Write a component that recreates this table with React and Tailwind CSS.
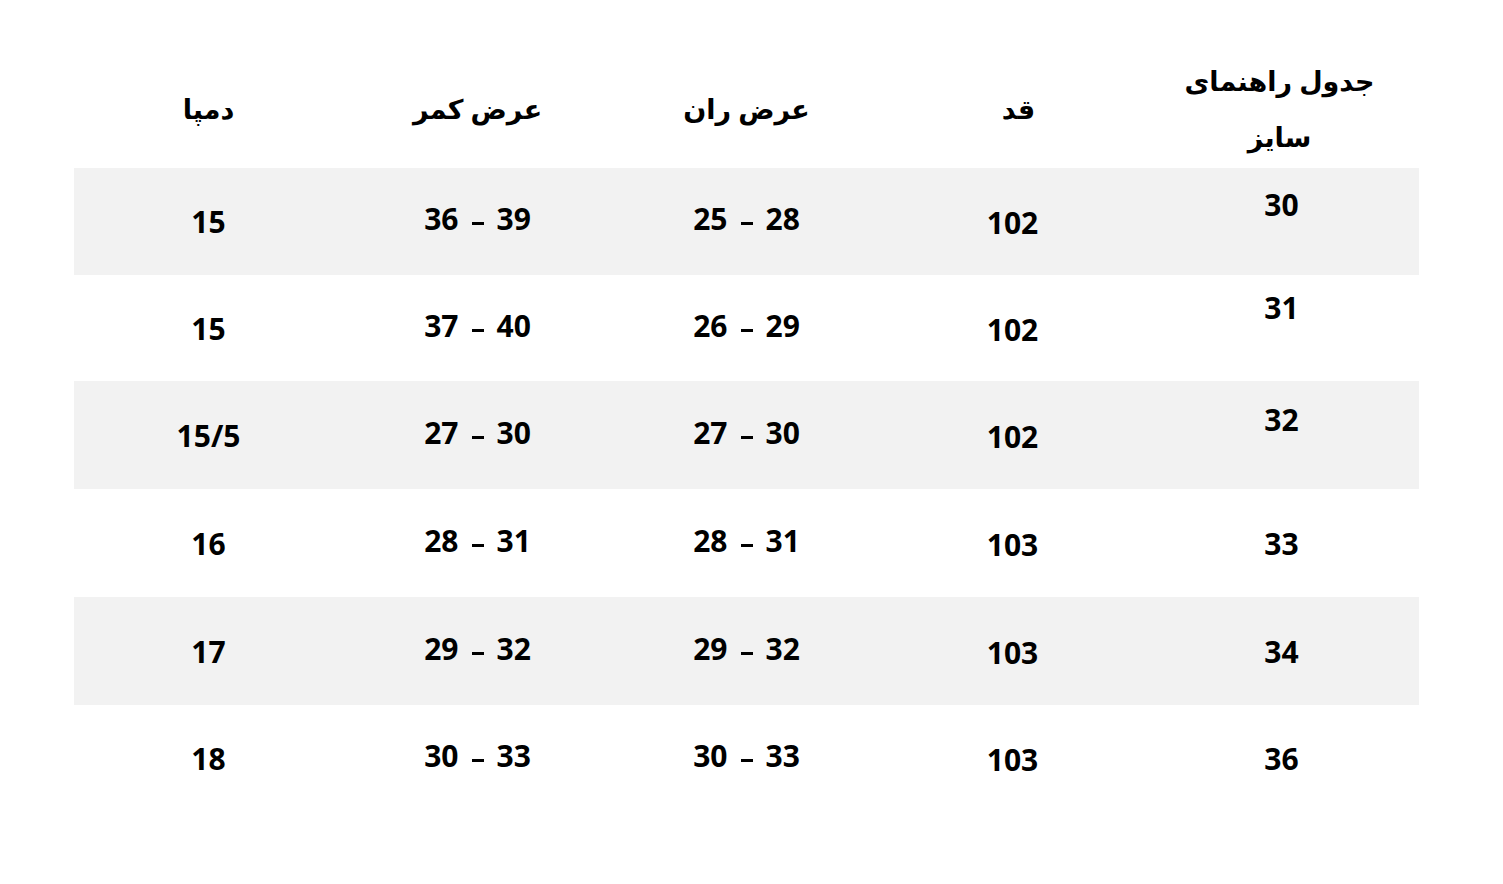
const rows = [
  { size: "30", height: "102", thigh: ["25", "28"], waist: ["36", "39"], hem: "15", h: "h-[107px]", bg: "bg-[#f2f2f2]", sizeShift: "-translate-y-[17px]" },
  { size: "31", height: "102", thigh: ["26", "29"], waist: ["37", "40"], hem: "15", h: "h-[106px]", bg: "bg-white", sizeShift: "-translate-y-[21px]" },
  { size: "32", height: "102", thigh: ["27", "30"], waist: ["27", "30"], hem: "15/5", h: "h-[108px]", bg: "bg-[#f2f2f2]", sizeShift: "-translate-y-[16px]" },
  { size: "33", height: "103", thigh: ["28", "31"], waist: ["28", "31"], hem: "16", h: "h-[108px]", bg: "bg-white", sizeShift: "" },
  { size: "34", height: "103", thigh: ["29", "32"], waist: ["29", "32"], hem: "17", h: "h-[108px]", bg: "bg-[#f2f2f2]", sizeShift: "" },
  { size: "36", height: "103", thigh: ["30", "33"], waist: ["30", "33"], hem: "18", h: "h-[107px]", bg: "bg-white", sizeShift: "" },
];

function Range({ value }) {
  // visual order as in the chart: low – high
  return (
    <div dir="ltr" className="flex items-center -translate-y-[3px]">
      <span>{value[0]}</span>
      <span className="inline-block w-[12px] h-[3px] bg-black mx-[13px] translate-y-[5px]" />
      <span>{value[1]}</span>
    </div>
  );
}

export default function App() {
  return (
    <div className="w-[1503px] h-[884px] bg-white text-black font-['Open_Sans','DejaVu_Sans',sans-serif]">
      <div dir="rtl" className="ml-[74px] w-[1345px]">
        {/* header */}
        <div className="grid grid-cols-5 h-[168px] pt-[50px] text-[27px] font-bold leading-[56px]">
          <div className="flex items-center justify-center text-center pr-[10px]">
            <span>
              جدول راهنمای
              <br />
              سایز
            </span>
          </div>
          <div className="flex items-center justify-center pl-[6px]">قد</div>
          <div className="flex items-center justify-center">عرض ران</div>
          <div className="flex items-center justify-center">عرض کمر</div>
          <div className="flex items-center justify-center">دمپا</div>
        </div>

        {rows.map((r) => (
          <div
            key={r.size}
            className={`grid grid-cols-5 ${r.h} ${r.bg} text-[30px] font-bold`}
          >
            <div className="flex items-center justify-center">
              <span className={`-translate-x-[3px] ${r.sizeShift}`}>{r.size}</span>
            </div>
            <div className="flex items-center justify-center">
              <span className="translate-y-[1px] -translate-x-[3px]">{r.height}</span>
            </div>
            <div className="flex items-center justify-center">
              <Range value={r.thigh} />
            </div>
            <div className="flex items-center justify-center">
              <Range value={r.waist} />
            </div>
            <div className="flex items-center justify-center">
              <span dir="ltr">{r.hem}</span>
            </div>
          </div>
        ))}
      </div>
    </div>
  );
}
